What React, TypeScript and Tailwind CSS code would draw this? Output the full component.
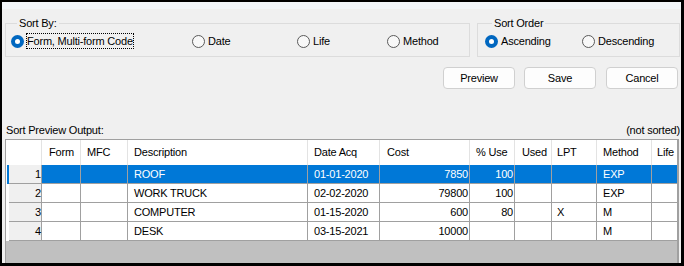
import React from "react";

type Col = { label: string; w: string; right?: boolean; pl?: string };

const cols: Col[] = [
  { label: "Form", w: "w-[39px]", pl: "pl-[7px]" },
  { label: "MFC", w: "w-[47px]" },
  { label: "Description", w: "w-[180px]" },
  { label: "Date Acq", w: "w-[72px]" },
  { label: "Cost", w: "w-[90px]", right: true, pl: "pl-[7px]" },
  { label: "% Use", w: "w-[45px]", right: true },
  { label: "Used", w: "w-[37px]", pl: "pl-[7px]" },
  { label: "LPT", w: "w-[45px]", pl: "pl-[5px]" },
  { label: "Method", w: "w-[55px]" },
  { label: "Life", w: "w-[25px]", pl: "pl-[5px]" },
];

const rows: string[][] = [
  ["", "", "ROOF", "01-01-2020", "7850", "100", "", "", "EXP", ""],
  ["", "", "WORK TRUCK", "02-02-2020", "79800", "100", "", "", "EXP", ""],
  ["", "", "COMPUTER", "01-15-2020", "600", "80", "", "X", "M", ""],
  ["", "", "DESK", "03-15-2021", "10000", "", "", "", "M", ""],
];

function Radio({ checked }: { checked?: boolean }) {
  return checked ? (
    <span className="w-[13px] h-[13px] shrink-0 rounded-full bg-[#0067c0] flex items-center justify-center">
      <span className="w-[5px] h-[5px] rounded-full bg-white" />
    </span>
  ) : (
    <span className="w-[13px] h-[13px] shrink-0 rounded-full border border-[#5a5a5a] bg-[#f8f8f8]" />
  );
}

function Option({
  label,
  checked,
  focused,
  w,
}: {
  label: string;
  checked?: boolean;
  focused?: boolean;
  w?: string;
}) {
  return (
    <div className={`flex items-center h-[16px] ${w ?? ""}`}>
      <Radio checked={checked} />
      {focused ? (
        <span className="ml-[2px] border border-dotted border-black leading-[14px] px-0">{label}</span>
      ) : (
        <span className="ml-[3px] leading-[14px]">{label}</span>
      )}
    </div>
  );
}

function Button({ label, cls }: { label: string; cls?: string }) {
  return (
    <div
      className={`w-[72px] h-[22px] rounded-[4px] border border-[#d0d0d0] bg-[#fdfdfd] flex items-center justify-center ${cls ?? ""}`}
    >
      {label}
    </div>
  );
}

export default function App() {
  return (
    <div className="w-[684px] h-[266px] bg-black pt-[2px] pl-[2px] pr-[3px] pb-[3px] flex flex-col overflow-hidden font-['Liberation_Sans',Arial,sans-serif] text-[11px] tracking-[-0.2px] text-black">
      <div className="h-[7px] bg-[#f3f6fa] shrink-0" />
      <div className="flex-1 min-h-0 bg-[#f0f0f0] flex flex-col overflow-hidden">
        <div className="flex mt-[7px] pl-[3px] pr-[1px] gap-[7px] shrink-0">
          <fieldset className="w-[465px] border border-[#dcdcdc] pl-[5px] pt-[3px] pb-[7px] m-0">
            <legend className="ml-[6px] px-[2px] leading-[14px]">Sort By:</legend>
            <div className="flex">
              <Option label="Form, Multi-form Code" checked focused w="w-[181px]" />
              <Option label="Date" w="w-[105px]" />
              <Option label="Life" w="w-[90px]" />
              <Option label="Method" />
            </div>
          </fieldset>
          <fieldset className="w-[203px] border border-[#dcdcdc] pl-[7px] pt-[3px] pb-[7px] m-0">
            <legend className="ml-[7px] px-[2px] leading-[14px]">Sort Order</legend>
            <div className="flex">
              <Option label="Ascending" checked w="w-[97px]" />
              <Option label="Descending" />
            </div>
          </fieldset>
        </div>

        <div className="flex justify-end mt-[10px] pr-[3px] shrink-0">
          <Button label="Preview" />
          <Button label="Save" cls="ml-[9px]" />
          <Button label="Cancel" cls="ml-[10px]" />
        </div>

        <div className="flex justify-between mt-[34px] h-[14px] leading-[14px] pl-[4px] pr-[1px] shrink-0">
          <span>Sort Preview Output:</span>
          <span>(not sorted)</span>
        </div>

        <div className="mt-[2px] ml-[3px] w-[674px] flex-1 min-h-0 border-l border-t border-r-2 border-[#a0a0a0] bg-[#c0c0c0] flex flex-col overflow-hidden">
          <div className="flex h-[25px] bg-white shrink-0">
            <div className="w-[36px] border-r border-[#e3e3e3]" />
            {cols.map((c, i) => (
              <div
                key={c.label}
                className={`${c.w} ${c.pl ?? "pl-[6px]"} leading-[25px] whitespace-nowrap ${
                  i < cols.length - 1 ? "border-r border-[#e3e3e3]" : ""
                }`}
              >
                {c.label}
              </div>
            ))}
          </div>
          {rows.map((r, ri) => {
            const sel = ri === 0;
            return (
              <div key={ri} className="flex h-[19px] shrink-0">
                <div className="w-[36px] flex">
                  <div className="w-[1px] bg-white" />
                  <div className={`w-[2px] ${sel ? "bg-[#0078d7]" : "bg-white"}`} />
                  <div className="flex-1 bg-[#f0f0f0] border-r border-b border-[#a0a0a0] text-right leading-[18px] pr-[0px]">
                    {ri + 1}
                  </div>
                </div>
                {cols.map((c, ci) => (
                  <div
                    key={ci}
                    className={`${c.w} border-b border-[#a0a0a0] leading-[18px] whitespace-nowrap overflow-hidden ${
                      ci < cols.length - 1 ? "border-r" : ""
                    } ${sel ? "bg-[#0078d7] text-white" : "bg-white"} ${
                      c.right ? "text-right pr-[1px]" : c.pl ?? "pl-[6px]"
                    }`}
                  >
                    {r[ci]}
                  </div>
                ))}
              </div>
            );
          })}
        </div>
      </div>
    </div>
  );
}
